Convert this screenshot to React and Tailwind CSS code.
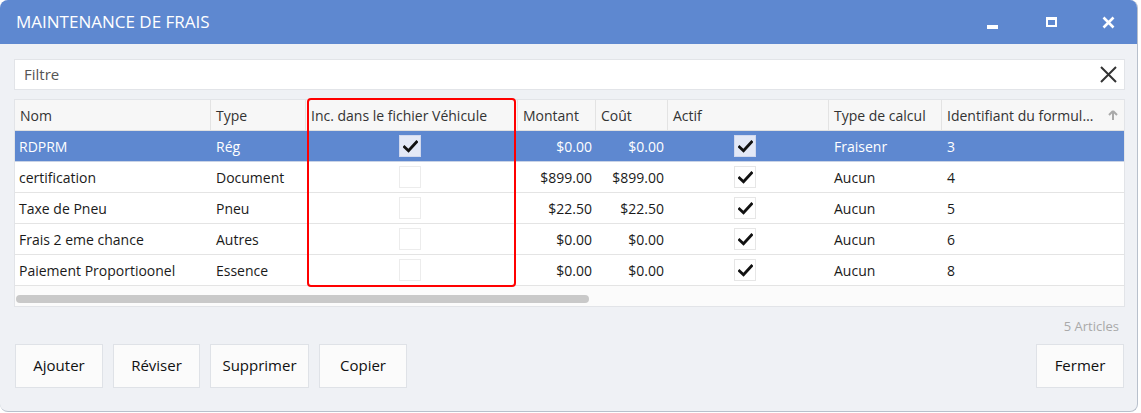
import React from "react";

const rows = [
  { nom: "RDPRM", type: "Rég", inc: true, montant: "$0.00", cout: "$0.00", actif: true, calcul: "Fraisenr", id: "3" },
  { nom: "certification", type: "Document", inc: false, montant: "$899.00", cout: "$899.00", actif: true, calcul: "Aucun", id: "4" },
  { nom: "Taxe de Pneu", type: "Pneu", inc: false, montant: "$22.50", cout: "$22.50", actif: true, calcul: "Aucun", id: "5" },
  { nom: "Frais 2 eme chance", type: "Autres", inc: false, montant: "$0.00", cout: "$0.00", actif: true, calcul: "Aucun", id: "6" },
  { nom: "Paiement Proportioonel", type: "Essence", inc: false, montant: "$0.00", cout: "$0.00", actif: true, calcul: "Aucun", id: "8" },
];

const cols = "grid grid-cols-[196px_95px_212px_78px_72px_161px_113px_181px]";

const Check = () => (
  <svg width="15" height="13" viewBox="0 0 15 13">
    <path d="M1.5 7 L5.5 10.8 L13.5 2" fill="none" stroke="#111" strokeWidth="2.8" strokeLinecap="square" />
  </svg>
);

const CheckBox = ({ checked, selected, bordered }) => (
  <div
    className={
      "w-[22px] h-[22px] flex items-center justify-center border " +
      (selected ? "bg-[#e3e8f6] border-[#d0d8ee]" : bordered ? "bg-white border-[#e6e6e6]" : "bg-white border-[#ececec]")
    }
  >
    {checked && <Check />}
  </div>
);

const HeaderCell = ({ children, last }) => (
  <div className={"h-[30px] flex items-center px-[5px] text-[#333] " + (last ? "" : "border-r border-[#e3e3e3]")}>
    {children}
  </div>
);

const Button = ({ children, className = "" }) => (
  <button className={"h-[44px] bg-[#fbfbfb] border border-[#dfe2e7] text-[15px] text-[#111] " + className}>
    {children}
  </button>
);

const App = () => {
  return (
    <div className="w-[1141px] h-[413px] bg-white" style={{ fontFamily: "'Open Sans', 'Noto Sans', sans-serif" }}>
      <div className="w-[1138px] h-[412px] rounded-[8px] overflow-hidden bg-[#eff1f5] border-r border-b border-[#b8c0cc] flex flex-col">
        {/* title bar */}
        <div className="h-[44px] bg-[#5e88d0] flex items-center pl-[16px] pr-[22px] shrink-0">
          <span className="text-white text-[17px]">MAINTENANCE DE FRAIS</span>
          <div className="ml-auto flex items-center">
            <div className="w-[11px] h-[4px] bg-white mt-[10px]" />
            <div className="ml-[48px] w-[11px] h-[10px] border-[2px] border-t-[3px] border-white" />
            <svg className="ml-[45px]" width="13" height="13" viewBox="0 0 13 13">
              <path d="M1.5 1.5 L11.5 11.5 M11.5 1.5 L1.5 11.5" stroke="white" strokeWidth="2.6" />
            </svg>
          </div>
        </div>

        <div className="flex-1 flex flex-col px-[14px] pt-[15px]">
          {/* filter */}
          <div className="h-[31px] w-[1111px] bg-white border border-[#e2e4e8] flex items-center pl-[9px] pr-[6px]">
            <span className="text-[15px] text-[#555]">Filtre</span>
            <svg className="ml-auto" width="19" height="19" viewBox="0 0 19 19">
              <path d="M2 2 L17 17 M17 2 L2 17" stroke="#333" strokeWidth="2" />
            </svg>
          </div>

          {/* grid */}
          <div className="relative mt-[9px] w-[1111px] h-[208px] bg-[#fbfbfb] border border-[#e2e4e8] text-[14px]">
            <div className={cols + " bg-[#f7f7f7] border-b border-[#e0e0e0]"}>
              <HeaderCell>Nom</HeaderCell>
              <HeaderCell>Type</HeaderCell>
              <HeaderCell>Inc. dans le fichier Véhicule</HeaderCell>
              <HeaderCell>Montant</HeaderCell>
              <HeaderCell>Coût</HeaderCell>
              <HeaderCell>Actif</HeaderCell>
              <HeaderCell>Type de calcul</HeaderCell>
              <HeaderCell last>
                <span className="truncate">Identifiant du formul…</span>
                <svg className="ml-auto shrink-0" width="10" height="11" viewBox="0 0 10 11">
                  <path d="M5 1 L1 5 M5 1 L9 5 M5 1 L5 10" stroke="#aaa" strokeWidth="2" fill="none" />
                </svg>
              </HeaderCell>
            </div>
            {rows.map((r, i) => {
              const sel = i === 0;
              return (
                <div
                  key={r.id}
                  className={
                    cols +
                    " h-[31px] items-center border-b " +
                    (sel ? "bg-[#5e88d0] text-white border-[#c9d3e6]" : "bg-white text-[#1a1a1a] border-[#e4e4e4]")
                  }
                >
                  <div className="px-[4px]">{r.nom}</div>
                  <div className="px-[5px]">{r.type}</div>
                  <div className="flex justify-center pr-[4px]">
                    <CheckBox checked={r.inc} selected={sel} />
                  </div>
                  <div className="text-right pr-[4px]">{r.montant}</div>
                  <div className="text-right pr-[4px]">{r.cout}</div>
                  <div className="flex justify-center pr-[7px]">
                    <CheckBox checked={r.actif} selected={sel} bordered />
                  </div>
                  <div className="px-[5px]">{r.calcul}</div>
                  <div className="px-[5px]">{r.id}</div>
                </div>
              );
            })}
            <div className="mt-[9px] ml-[1px] w-[573px] h-[8px] rounded-full bg-[#c9c9c9]" />

            {/* highlight overlay */}
            <div className="absolute left-[292px] top-[-2px] w-[209px] h-[189px] border-[2px] border-[#ff0000] rounded-[4px] pointer-events-none" />
          </div>

          <div className="w-[1111px] flex justify-end pr-[6px] mt-[10px] text-[13px] text-[#a9a9a9]">5 Articles</div>

          {/* buttons */}
          <div className="w-[1110px] flex items-center mt-[7px]">
            <Button className="w-[88px] ml-[1px]">Ajouter</Button>
            <Button className="w-[87px] ml-[10px]">Réviser</Button>
            <Button className="w-[99px] ml-[10px]">Supprimer</Button>
            <Button className="w-[88px] ml-[10px]">Copier</Button>
            <Button className="w-[88px] ml-auto">Fermer</Button>
          </div>
        </div>
      </div>
    </div>
  );
};

export default App;
